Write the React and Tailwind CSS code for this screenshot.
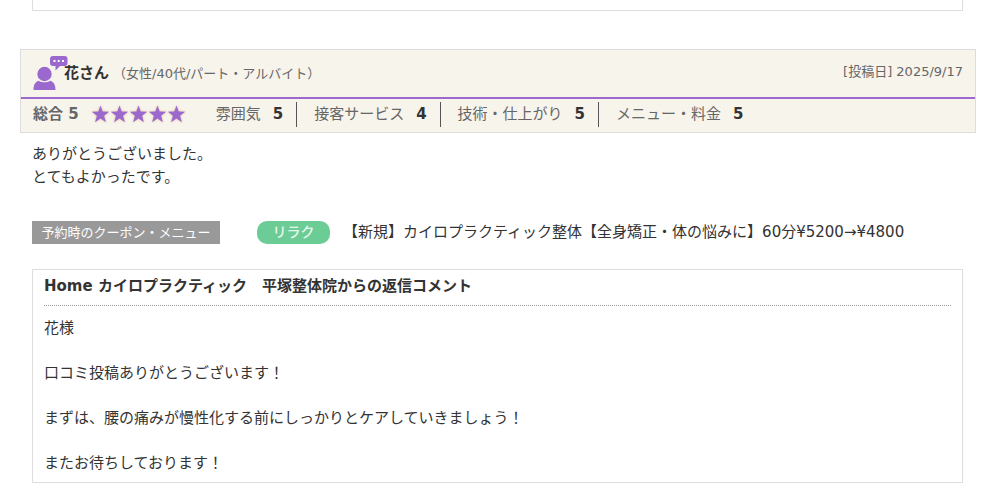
import React from 'react';

const scores = [
  { label: '雰囲気', value: 5 },
  { label: '接客サービス', value: 4 },
  { label: '技術・仕上がり', value: 5 },
  { label: 'メニュー・料金', value: 5 },
];

const replyLines = [
  '花様',
  '口コミ投稿ありがとうございます！',
  'まずは、腰の痛みが慢性化する前にしっかりとケアしていきましょう！',
  'またお待ちしております！',
];

function UserIcon() {
  return (
    <svg viewBox="0 0 36 36" className="h-9 w-9 shrink-0" fill="#9b68cd" aria-hidden="true">
      <path d="M20 1h11.500a3 3 0 0 1 3 3v4a3 3 0 0 1-3 3H27l-4.500 4.500V11H20a3 3 0 0 1-3-3V4a3 3 0 0 1 3-3z" />
      <circle cx="11.500" cy="19" r="7.200" />
      <path d="M.5 35c0-5 1.500-8 5.200-9.300 3.300 2.200 8.300 2.200 11.600 0C21 27 22.500 30 22.500 35z" />
      <path d="M20.500 5h2v2h-2zM24.700 5h2v2h-2zM29 5h2v2h-2z" fill="#fff" />
    </svg>
  );
}

function Stars({ count }) {
  return (
    <span className="flex" role="img" aria-label={`${count}つ星`}>
      {Array.from({ length: count }, (_, i) => (
        <svg key={i} viewBox="0 0 19 20" className="h-5 w-[19px] drop-shadow-[0_0_1px_#e0b890]" fill="#9b68cd">
          <path d="M9.500.5l2.200 6 6.500.3-5.100 4 1.800 6.400-5.400-3.600-5.400 3.600 1.800-6.400-5.100-4 6.500-.3z" />
        </svg>
      ))}
    </span>
  );
}

function App() {
  return (
    <div className="bg-white pl-5 pr-[15px] pb-5 font-['DejaVu_Sans','Noto_Sans_CJK_JP',sans-serif] text-[15px] leading-[23px] text-[#333]">
      {/* End of the previous review */}
      <div className="ml-3 mr-[13px] h-[11px] border border-t-0 border-[#ddd]" />

      <article className="mt-[38px]">
        <header className="border border-[#ddd] bg-[#f7f4ec]">
          <div className="flex items-start justify-between border-b-2 border-[#9b68cd] pt-[5px] pb-[6px] pl-3 pr-3">
            <div className="flex items-center">
              <UserIcon />
              <h2 className="-ml-[5px] font-bold">花さん</h2>
              <span className="ml-1 text-[13px] text-[#666]">（女性/40代/パート・アルバイト）</span>
            </div>
            <p className="mt-[5px] text-[13px] text-[#666]">[投稿日] 2025/9/17</p>
          </div>
          <div className="flex items-center pt-[3px] pb-[5px] pl-3">
            <span className="font-bold text-[#666]">総合 5</span>
            <div className="ml-3">
              <Stars count={5} />
            </div>
            <ul className="ml-[13px] flex">
              {scores.map((score) => (
                <li
                  key={score.label}
                  className="flex gap-3 border-r border-[#555] pr-[13px] pl-[17px] leading-[25px] last:border-r-0"
                >
                  <span className="text-[#666]">{score.label}</span>
                  <b>{score.value}</b>
                </li>
              ))}
            </ul>
          </div>
        </header>

        <div className="ml-3 mr-[13px]">
          <p className="mt-[10px]">
            ありがとうございました。
            <br />
            とてもよかったです。
          </p>

          <div className="mt-8 flex items-center">
            <span className="w-[188px] bg-[#999] text-center text-[13px] text-white">予約時のクーポン・メニュー</span>
            <span className="ml-[37px] w-[73px] rounded-[10px] bg-[#6ccc95] text-center text-[14px] font-medium text-[#e4f7ec]">
              リラク
            </span>
            <p className="ml-[13px]">【新規】カイロプラクティック整体【全身矯正・体の悩みに】60分¥5200→¥4800</p>
          </div>

          <section className="mt-[25px] border border-[#ddd] px-[11px] pt-[5px] pb-[7px]">
            <h3 className="border-b border-dotted border-[#999] pb-[7px] font-bold">
              Home カイロプラクティック　平塚整体院からの返信コメント
            </h3>
            <div className="mt-[11px] flex flex-col gap-[22px]">
              {replyLines.map((line) => (
                <p key={line}>{line}</p>
              ))}
            </div>
          </section>
        </div>
      </article>
    </div>
  );
}

export default App;
